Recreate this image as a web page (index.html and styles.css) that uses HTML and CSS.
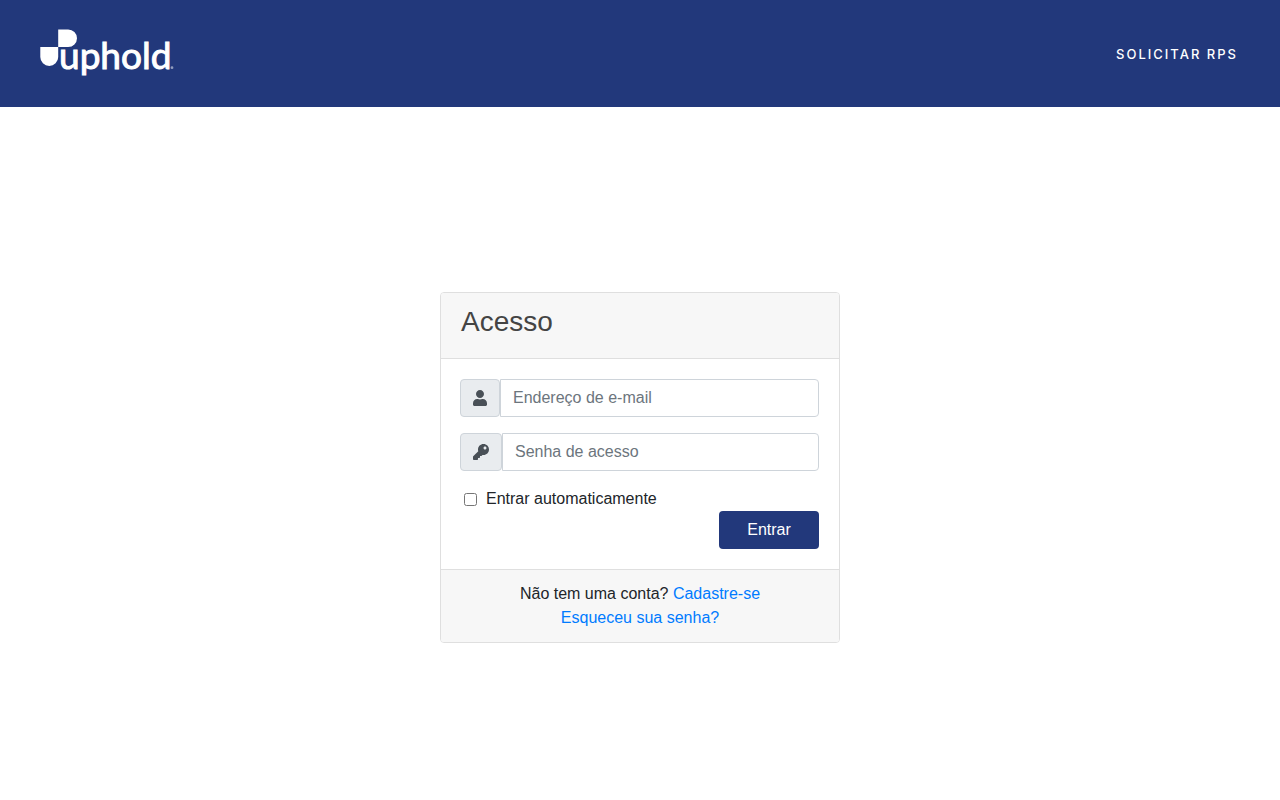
FILE: index.html
```html
<!DOCTYPE html>
<html lang="pt-BR">
<head>
<meta charset="utf-8">
<meta name="viewport" content="width=device-width, initial-scale=1">
<title>Acesso</title>
<link rel="stylesheet" href="styles.css">
</head>
<body>
<header class="navbar">
  <a class="brand" href="#" aria-label="uphold">
    <svg class="logo" viewBox="0 0 136 51" width="136" height="51">
      <path d="M18.200 1.400h10a8.800 8.800 0 0 1 0 17.600h-10zM0.300 19h17.900v10a8.950 8.950 0 0 1-17.900 0z"/>
      <text class="logo-word" x="19" y="41">uphold</text>
      <circle class="logo-mark" cx="132" cy="39.700" r="1.400"/>
    </svg>
  </a>
  <nav><a class="nav-link" href="#">SOLICITAR RPS</a></nav>
</header>
<main class="page">
  <section class="card">
    <div class="card-header"><h3 class="card-title">Acesso</h3></div>
    <form class="card-body">
      <div class="input-group">
        <label class="addon" for="email" aria-label="Endereço de e-mail">
          <svg viewBox="0 0 448 512" width="14" height="16"><path d="M224 256c70.700 0 128-57.300 128-128S294.700 0 224 0 96 57.300 96 128s57.300 128 128 128zm89.600 32h-16.700c-22.200 10.200-46.900 16-72.900 16s-50.600-5.800-72.900-16h-16.700C60.200 288 0 348.200 0 422.400V464c0 26.500 21.500 48 48 48h352c26.500 0 48-21.500 48-48v-41.600c0-74.200-60.200-134.400-134.400-134.400z"/></svg>
        </label>
        <input class="field" id="email" type="email" placeholder="Endereço de e-mail">
      </div>
      <div class="input-group">
        <label class="addon" for="password" aria-label="Senha de acesso">
          <svg viewBox="0 0 512 512" width="16" height="16"><path d="M512 176C512 273.200 433.200 352 336 352c-11.220 0-22.190-1.060-32.830-3.070l-24.010 27.010A24 24 0 0 1 261.220 384H224v40c0 13.250-10.750 24-24 24h-40v40c0 13.250-10.750 24-24 24H24c-13.250 0-24-10.750-24-24v-78.060c0-6.360 2.530-12.470 7.030-16.970l161.800-161.800C163.110 213.810 160 195.270 160 176 160 78.800 238.800 0 336 0 433.490 0 512 78.510 512 176zM336 128c0 26.510 21.490 48 48 48s48-21.490 48-48-21.490-48-48-48-48 21.490-48 48z"/></svg>
        </label>
        <input class="field" id="password" type="password" placeholder="Senha de acesso">
      </div>
      <div class="remember">
        <input class="check" id="remember" type="checkbox">
        <label for="remember">Entrar automaticamente</label>
      </div>
      <button class="submit" type="submit">Entrar</button>
    </form>
    <div class="card-footer">
      <div>Não tem uma conta? <a href="#">Cadastre-se</a></div>
      <div><a href="#">Esqueceu sua senha?</a></div>
    </div>
  </section>
</main>
</body>
</html>
```
FILE: styles.css
```css
* {
  box-sizing: border-box;
}

body {
  margin: 0;
  min-height: 100vh;
  display: flex;
  flex-direction: column;
  background: #fff;
  color: #212529;
  font-family: "Liberation Sans", Arial, sans-serif;
  font-size: 16px;
  line-height: 24px;
}

a {
  color: #007bff;
  text-decoration: none;
}

.navbar {
  display: flex;
  align-items: center;
  justify-content: space-between;
  padding: 28px 42px 28px 40px;
  background: #22387b;
}

.brand {
  display: flex;
}

.logo {
  overflow: visible;
  fill: #fff;
}

.logo-word {
  font-family: Lato, sans-serif;
  font-size: 37px;
  font-weight: 400;
  stroke: #fff;
  stroke-width: 1px;
}

.logo-mark {
  opacity: 0.5;
}

.nav-link {
  display: block;
  color: #fff;
  font-family: Inter, sans-serif;
  font-size: 13px;
  font-weight: 500;
  line-height: 20px;
  letter-spacing: 2px;
}

.page {
  flex: 1;
  display: flex;
  align-items: center;
  justify-content: center;
  padding-top: 28px;
}

.card {
  width: 100%;
  max-width: 400px;
  border: 1px solid #dfdfdf;
  border-radius: 4px;
  overflow: hidden;
}

.card-header {
  padding: 12px 20px 20px;
  background: #f7f7f7;
  border-bottom: 1px solid #dfdfdf;
}

.card-title {
  margin: 0;
  color: #444;
  font-size: 28px;
  font-weight: 400;
  line-height: 33px;
}

.card-body {
  display: flex;
  flex-direction: column;
  padding: 20px 20px 20px 19px;
}

.input-group {
  display: flex;
  margin-bottom: 16px;
}

.addon {
  display: flex;
  align-items: center;
  padding: 0 12px;
  background: #e9ecef;
  border: 1px solid #ced4da;
  border-radius: 4px;
  fill: #495057;
}

.field {
  flex: 1;
  min-width: 0;
  height: 38px;
  padding: 6px 12px;
  border: 1px solid #ced4da;
  border-radius: 0 4px 4px 0;
  background: #fff;
  color: #495057;
  font: inherit;
}

.field::placeholder {
  color: #6c757d;
  opacity: 1;
}

.remember {
  display: flex;
  align-items: center;
  gap: 9px;
  padding-left: 4px;
}

.check {
  width: 13px;
  height: 13px;
  margin: 1px 0 0;
}

.submit {
  align-self: flex-end;
  width: 100px;
  height: 38px;
  border: 0;
  border-radius: 4px;
  background: #22387b;
  color: #fff;
  font: inherit;
}

.card-footer {
  padding: 12px 20px;
  background: #f7f7f7;
  border-top: 1px solid #dfdfdf;
  text-align: center;
}
```
